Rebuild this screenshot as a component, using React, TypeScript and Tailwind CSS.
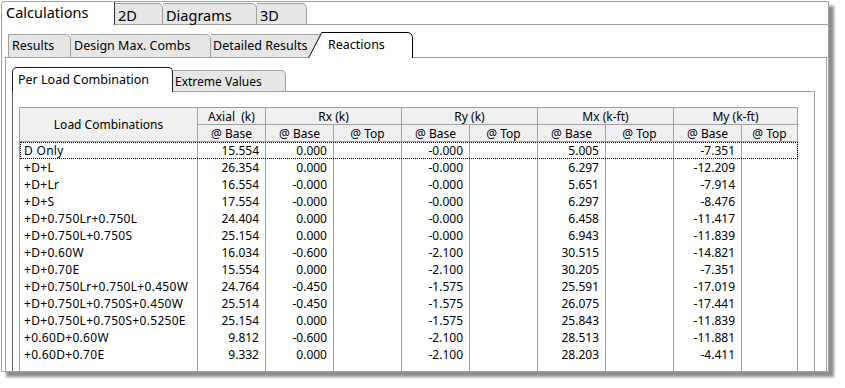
import type { ReactNode } from "react";

type Row = [string, string, string, string, string, string];

const rows: Row[] = [
  ["D Only", "15.554", "0.000", "-0.000", "5.005", "-7.351"],
  ["+D+L", "26.354", "0.000", "-0.000", "6.297", "-12.209"],
  ["+D+Lr", "16.554", "-0.000", "-0.000", "5.651", "-7.914"],
  ["+D+S", "17.554", "-0.000", "-0.000", "6.297", "-8.476"],
  ["+D+0.750Lr+0.750L", "24.404", "0.000", "-0.000", "6.458", "-11.417"],
  ["+D+0.750L+0.750S", "25.154", "0.000", "-0.000", "6.943", "-11.839"],
  ["+D+0.60W", "16.034", "-0.600", "-2.100", "30.515", "-14.821"],
  ["+D+0.70E", "15.554", "0.000", "-2.100", "30.205", "-7.351"],
  ["+D+0.750Lr+0.750L+0.450W", "24.764", "-0.450", "-1.575", "25.591", "-17.019"],
  ["+D+0.750L+0.750S+0.450W", "25.514", "-0.450", "-1.575", "26.075", "-17.441"],
  ["+D+0.750L+0.750S+0.5250E", "25.154", "0.000", "-1.575", "25.843", "-11.839"],
  ["+0.60D+0.60W", "9.812", "-0.600", "-2.100", "28.513", "-11.881"],
  ["+0.60D+0.70E", "9.332", "0.000", "-2.100", "28.203", "-4.411"],
];

const grid = "grid grid-cols-[178px_68px_68px_68px_68px_68px_68px_68px_68px_56px]";
const head = "border-r border-b border-[#a0a0a0] bg-[#f0f0f0] h-[17px] leading-[17px] text-center";
const cell = "border-r border-[#a0a0a0] h-[17px] leading-[18px] text-right pr-[6px] bg-white";
const nameCell = "border-r border-[#a0a0a0] h-[17px] leading-[18px] text-left pl-[4px] tracking-[0.3px] whitespace-nowrap bg-white";

function TopTab({ w, children }: { w: string; children: ReactNode }) {
  return (
    <div className={`${w} h-[22px] bg-[#e6e6e6] border-t border-r border-b border-[#a0a0a0] rounded-tr-[5px] pl-[3px] pt-[2px] leading-[18px]`}>
      {children}
    </div>
  );
}

function SubTab({ w, pl, left, children }: { w: string; pl: string; left?: boolean; children: ReactNode }) {
  return (
    <div className={`${w} ${pl} ${left ? "border-l" : ""} h-[24px] bg-[#e6e6e6] border-t border-r border-b border-[#a0a0a0] rounded-tr-[5px] leading-[22px] whitespace-nowrap overflow-hidden`}>
      {children}
    </div>
  );
}

export default function App() {
  return (
    <div className="w-[845px] h-[388px] bg-white font-['Noto_Sans',sans-serif] text-black">
      <div className="ml-px mt-px w-[828px] h-[371px] border border-[#a0a0a0] rounded-tl-[3px] flex flex-col overflow-hidden shadow-[5px_5px_3px_rgba(0,0,0,0.45)]">
        {/* main tabs */}
        <div className="flex items-end h-[23px] shrink-0 text-[14.5px]">
          <div className="w-[113px] h-full border-r border-[#303030] pl-[4px] leading-[20px]">Calculations</div>
          <TopTab w="w-[48px]">2D</TopTab>
          <TopTab w="w-[94px]">Diagrams</TopTab>
          <TopTab w="w-[50px]">3D</TopTab>
          <div className="flex-1 border-b border-[#a0a0a0]" />
        </div>

        <div className="flex-1 min-h-0 flex flex-col pl-[3px] pr-px">
          {/* result tabs */}
          <div className="flex items-end h-[33px] shrink-0 text-[12.5px]">
            <div className="w-[3px] border-b border-[#a0a0a0]" />
            <SubTab w="w-[63px]" pl="pl-[3px]" left>Results</SubTab>
            <SubTab w="w-[140px]" pl="pl-[3px]">Design Max. Combs</SubTab>
            <SubTab w="w-[113px]" pl="pl-[2px]">Detailed Results</SubTab>
            <div className="relative w-[105px] h-[26px] ml-[-16px]">
              <svg className="absolute inset-0" width="105" height="26" viewBox="0 0 105 26">
                <path d="M0 26 L13.5 0.5 H99 Q104.5 0.5 104.5 6 V26 Z" fill="#ffffff" />
                <path d="M0.5 26 L13.8 0.5 H99 Q104.5 0.5 104.5 6 V26" fill="none" stroke="#000000" strokeWidth="1" />
              </svg>
              <span className="relative block pl-[20px] leading-[25px]">Reactions</span>
            </div>
            <div className="flex-1 border-b border-[#a0a0a0]" />
          </div>

          <div className="flex-1 min-h-0 border-l border-r border-[#a0a0a0] flex flex-col pl-[6px] pr-[11px]">
            {/* reaction tabs */}
            <div className="flex items-end h-[34px] shrink-0 text-[12.5px]">
              <div className="w-[161px] h-[25px] bg-white border-l border-t border-r border-[#1a1a1a] rounded-t-[5px] pl-[5px] leading-[23px]">
                Per Load Combination
              </div>
              <div className="w-[113px] h-[22px] bg-[#e6e6e6] border-t border-r border-b border-[#a0a0a0] rounded-tr-[5px] pl-[2px] pt-px leading-[19px] text-[12px]">
                Extreme Values
              </div>
              <div className="flex-1 border-b border-[#a0a0a0]" />
            </div>

            <div className="flex-1 min-h-0 border-l border-r border-l-[#606060] border-r-[#a0a0a0] pl-[6px] pt-[15px] overflow-hidden">
              <div className="w-fit border-l border-t border-[#a0a0a0] text-[12px]">
                <div className={`${grid} grid-rows-[17px_17px]`}>
                  <div className={`${head} row-span-2 h-[34px] flex items-center justify-center`}>Load Combinations</div>
                  <div className={`${head} whitespace-pre`}>Axial  (k)</div>
                  <div className={`${head} col-span-2`}>Rx (k)</div>
                  <div className={`${head} col-span-2`}>Ry (k)</div>
                  <div className={`${head} col-span-2`}>Mx (k-ft)</div>
                  <div className={`${head} col-span-2`}>My (k-ft)</div>
                  <div className={head}>@ Base</div>
                  <div className={head}>@ Base</div>
                  <div className={head}>@ Top</div>
                  <div className={head}>@ Base</div>
                  <div className={head}>@ Top</div>
                  <div className={head}>@ Base</div>
                  <div className={head}>@ Top</div>
                  <div className={head}>@ Base</div>
                  <div className={head}>@ Top</div>
                </div>
                {rows.map((r, i) => (
                  <div key={i} className={`${grid} relative`}>
                    <div className={nameCell}>{r[0]}</div>
                    <div className={cell}>{r[1]}</div>
                    <div className={cell}>{r[2]}</div>
                    <div className={cell}></div>
                    <div className={cell}>{r[3]}</div>
                    <div className={cell}></div>
                    <div className={cell}>{r[4]}</div>
                    <div className={cell}></div>
                    <div className={cell}>{r[5]}</div>
                    <div className={cell}></div>
                    {i === 0 && <span className="absolute inset-0 border border-dotted border-black pointer-events-none" />}
                  </div>
                ))}
                <div className={grid}>
                  {Array.from({ length: 10 }).map((_, j) => (
                    <div key={j} className={cell}></div>
                  ))}
                </div>
              </div>
            </div>
          </div>
        </div>
      </div>
    </div>
  );
}
